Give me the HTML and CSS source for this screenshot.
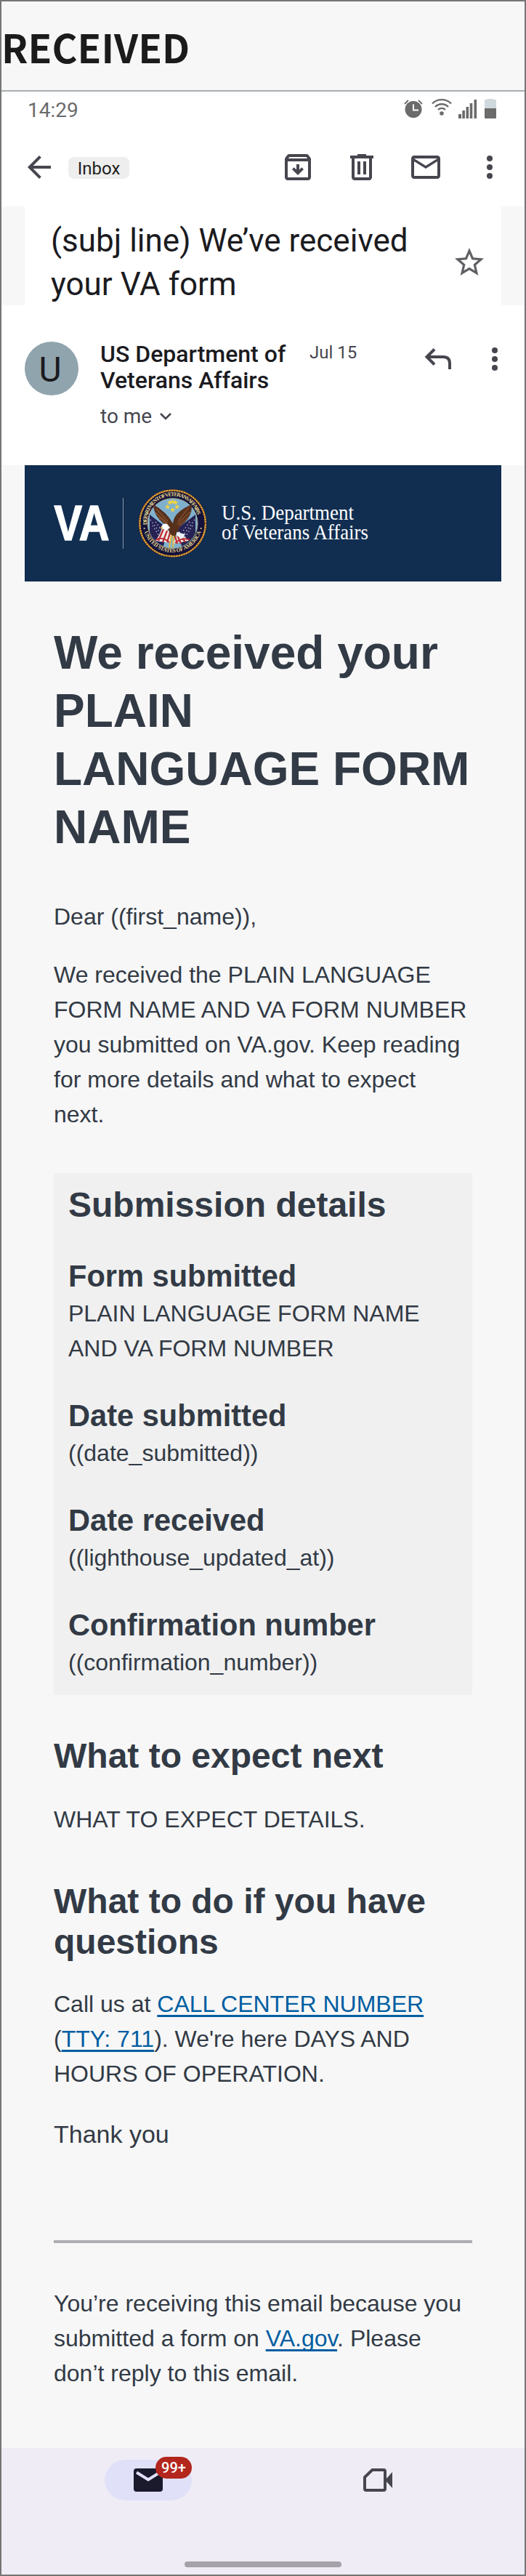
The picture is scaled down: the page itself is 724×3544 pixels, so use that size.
FILE: index.html
```html
<!DOCTYPE html>
<html lang="en">
<head>
<meta charset="utf-8">
<title>We received your form</title>
<link rel="stylesheet" href="styles.css">
</head>
<body>
<div class="frame">
  <header class="label"><span class="label-text">RECEIVED</span></header>

  <div class="status">
    <span class="clock">14:29</span>
    <svg class="status-icons" width="130" height="30" viewBox="0 0 130 30" fill="none">
      <circle cx="14" cy="16.500" r="11.500" fill="#6b6b6b"/>
      <path d="M14 9.500v8h7" stroke="#fff" stroke-width="2"/>
      <path d="M2 9l5-5M26 9l-5-5" stroke="#6b6b6b" stroke-width="1.800"/>
      <circle cx="53" cy="22" r="2.800" fill="#6b6b6b"/>
      <path d="M40 8.500a18.500 18.500 0 0 1 26 0M44 13a12.800 12.800 0 0 1 18 0M48 17a7 7 0 0 1 10 0" stroke="#6b6b6b" stroke-width="2.400"/>
      <path d="M76 23h4v6h-4zM81.300 18h3.600v11h-3.600zM86.500 13h3.600v16h-3.600zM91.700 8h3.600v21h-3.600zM97.500 3h3.600v26h-3.600z" fill="#6b6b6b"/>
      <path d="M112 4q0-1 1-1h3V2h8v1h3q1 0 1 1v12h-16z" fill="#cfd8dc"/>
      <path d="M112 15h16v13q0 1-1 1h-14q-1 0-1-1z" fill="#6b6b6b"/>
    </svg>
  </div>

  <nav class="toolbar">
    <svg width="48" height="48" viewBox="0 0 24 24" fill="#47464f"><path d="M20 11H7.830l5.590-5.590L12 4l-8 8 8 8 1.410-1.410L7.830 13H20z"/></svg>
    <span class="pill">Inbox</span>
    <div class="actions">
      <svg width="48" height="48" viewBox="0 0 24 24" fill="#47464f"><path d="M20.540 5.230l-1.390-1.680C18.880 3.210 18.470 3 18 3H6c-.47 0-.88.21-1.160.55L3.460 5.230C3.170 5.570 3 6.020 3 6.500V19c0 1.100.9 2 2 2h14c1.100 0 2-.9 2-2V6.500c0-.48-.17-.93-.46-1.270zM6.240 5h11.520l.83 1H5.420l.82-1zM5 19V8h14v11H5zM13 10h-2v3.700l-1.600-1.600L8 13.500l4 4 4-4-1.400-1.400-1.600 1.600z"/></svg>
      <svg width="48" height="48" viewBox="0 0 24 24" fill="#47464f"><path d="M15 4V3H9v1H4v2h1v13c0 1.100.9 2 2 2h10c1.100 0 2-.9 2-2V6h1V4h-5zm2 15H7V6h10v13zM9 8h2v9H9zM13 8h2v9h-2z"/></svg>
      <svg width="48" height="48" viewBox="0 0 24 24" fill="#47464f"><path d="M20 4H4c-1.100 0-2 .9-2 2v12c0 1.100.9 2 2 2h16c1.100 0 2-.9 2-2V6c0-1.100-.9-2-2-2zm0 14H4V8l8 5 8-5v10zm-8-7L4 6h16l-8 5z"/></svg>
      <svg width="48" height="48" viewBox="0 0 24 24" fill="#47464f"><circle cx="12" cy="6" r="2"/><circle cx="12" cy="12" r="2"/><circle cx="12" cy="18" r="2"/></svg>
    </div>
  </nav>

  <section class="subject-band">
    <div class="subject">
      <h1 class="subject-text">(subj line) We’ve received<br>your VA form</h1>
      <svg class="star" width="48" height="48" viewBox="0 0 24 24" fill="#5f6064"><path d="M22 9.240l-7.190-.62L12 2 9.190 8.630 2 9.240l5.460 4.730L5.820 21 12 17.270 18.180 21l-1.630-7.030L22 9.240zM12 15.400l-3.760 2.270 1-4.280-3.320-2.880 4.380-.38L12 6.100l1.710 4.040 4.380.38-3.320 2.880 1 4.280L12 15.400z"/></svg>
    </div>
  </section>

  <section class="sender">
    <div class="avatar">U</div>
    <div class="sender-info">
      <div class="name">US Department of<br>Veterans Affairs</div>
      <div class="to">to me
        <svg width="18" height="12" viewBox="0 0 18 12" fill="none" stroke="#47464f" stroke-width="2.600"><path d="M2 2l7 7 7-7"/></svg>
      </div>
    </div>
    <div class="date">Jul 15</div>
    <svg class="reply" width="38" height="30" viewBox="0 0 38 30" fill="none" stroke="#47464f" stroke-width="4"><path d="M14 1.500L3.500 12 14 22.500M4 12h22q9 0 9 9v8"/></svg>
    <svg class="more" width="8" height="32" viewBox="0 0 8 32" fill="#47464f"><circle cx="4" cy="4" r="4"/><circle cx="4" cy="16" r="4"/><circle cx="4" cy="28" r="4"/></svg>
  </section>

  <main class="mail">
    <svg class="banner" width="656" height="160" viewBox="34 640 656 160">
      <defs>
        <path id="arc-top" d="M202.600 723a35.400 35.400 0 1 1 70 0"/>
        <path id="arc-bottom" d="M197.400 727a41 41 0 0 0 80.400 0"/>
        <clipPath id="disc"><circle cx="237.600" cy="720" r="34"/></clipPath>
      </defs>
      <rect x="34" y="640" width="656" height="160" fill="#112e51"/>
      <text class="va" x="74.500" y="743" textLength="76" lengthAdjust="spacingAndGlyphs">VA</text>
      <path d="M169.500 685v70" stroke="#8797a8"/>
      <circle cx="237.600" cy="720" r="47.200" fill="#1d1838"/>
      <circle cx="237.600" cy="720" r="45.300" fill="none" stroke="#e3a735" stroke-width="2.200"/>
      <circle cx="237.600" cy="720" r="45.300" fill="none" stroke="#7a4a22" stroke-width="2.200" stroke-dasharray="1 2.500"/>
      <circle cx="237.600" cy="720" r="43.800" fill="#14123c"/>
      <circle cx="237.600" cy="720" r="34.500" fill="#7fb1cf" stroke="#c9b97a" stroke-width=".7"/>
      <g clip-path="url(#disc)">
        <path d="M206 708l26 20-8 26-18-8z" fill="#262254"/>
        <path d="M269 708l-26 20 8 26 18-8z" fill="#262254"/>
        <path d="M207 715l17 23M210 723l12 19M214 718l10 14M268 715l-17 23M265 723l-12 19M261 718l-10 14" stroke="#b9bdd6" stroke-width="1.300" stroke-dasharray="1.500 3"/>
        <path d="M223 726l12 5-1 16-20-3q6-8 9-18zM246 731l14 13-22 4z" fill="#f1eee9"/>
        <path d="M225 728l-7 16M230 730l-6 16M234 733l-4 13M247 734l8 12M244 736l5 12M241 738l3 10" stroke="#b92c35" stroke-width="2.300"/>
        <path d="M214 743q10-6 20 4M261 743q-9-5-20 4" stroke="#b92c35" stroke-width="2" fill="none"/>
      </g>
      <path d="M211 694q1 19 20 30l2 9 7 7 5-10 4-7q16-11 15-29-8 3-16 9-9 7-10 17-9-16-27-26z" fill="#57301c"/>
      <path d="M215 700l16 17M214 705l17 15M218 711l13 11M260 698l-15 19M262 704l-18 17M259 712l-13 11" stroke="#8a5431" stroke-width="1.200"/>
      <path d="M222 725q2-6 8-4l4 5-5 4q-5-2-7-5z" fill="#fff"/>
      <path d="M223 724l-3 3 4 0z" fill="#e8b93a"/>
      <path d="M243 732l12 3-4 6-8-4z" fill="#eaf1f6"/>
      <path d="M236 736l-3 17M239 737l-1 16" stroke="#e6b93b" stroke-width="2"/>
      <g fill="#f2d33f">
        <path id="s" d="M237.600 686.500l.9 2.600 2.800.1-2.200 1.700.8 2.700-2.300-1.600-2.300 1.600.8-2.700-2.200-1.700 2.800-.1z"/>
        <use href="#s" x="-4" y="1"/><use href="#s" x="4" y="1"/>
        <use href="#s" x="-7" y="7"/><use href="#s" x="6" y="7"/><use href="#s" x="0" y="11"/>
      </g>
      <text class="seal-text"><textPath href="#arc-top" startOffset="1" textLength="106">DEPARTMENT OF VETERANS AFFAIRS</textPath></text>
      <text class="seal-text"><textPath href="#arc-bottom" startOffset="5" textLength="103">UNITED STATES OF AMERICA</textPath></text>
      <circle cx="198.600" cy="727" r="1" fill="#e9dc8e"/><circle cx="276.600" cy="727" r="1" fill="#e9dc8e"/>
      <text class="dept" x="305" y="715" textLength="182" lengthAdjust="spacingAndGlyphs">U.S. Department</text>
      <text class="dept" x="305" y="742" textLength="202" lengthAdjust="spacingAndGlyphs">of Veterans Affairs</text>
    </svg>

    <article class="body">
      <h1 class="title">We received your<br>PLAIN<br>LANGUAGE FORM<br>NAME</h1>
      <p class="dear">Dear ((first_name)),</p>
      <p class="intro">We received the PLAIN LANGUAGE<br>FORM NAME AND VA FORM NUMBER<br>you submitted on VA.gov. Keep reading<br>for more details and what to expect<br>next.</p>

      <section class="details">
        <h2>Submission details</h2>
        <h3>Form submitted</h3>
        <p>PLAIN LANGUAGE FORM NAME<br>AND VA FORM NUMBER</p>
        <h3>Date submitted</h3>
        <p>((date_submitted))</p>
        <h3>Date received</h3>
        <p>((lighthouse_updated_at))</p>
        <h3>Confirmation number</h3>
        <p>((confirmation_number))</p>
      </section>

      <h2 class="next">What to expect next</h2>
      <p class="next-text">WHAT TO EXPECT DETAILS.</p>
      <h2 class="questions">What to do if you have<br>questions</h2>
      <p class="call">Call us at <a>CALL CENTER NUMBER</a><br>(<a>TTY: 711</a>). We're here DAYS AND<br>HOURS OF OPERATION.</p>
      <p class="thanks">Thank you</p>
      <div class="rule"></div>
      <p class="foot">You’re receiving this email because you<br>submitted a form on <a>VA.gov</a>. Please<br>don’t reply to this email.</p>
    </article>
  </main>

  <footer class="tabs">
    <div class="tab-row">
      <div class="tab-active">
        <svg width="40" height="32" viewBox="0 0 40 32"><rect width="40" height="32" rx="4" fill="#1a1a2c"/><path d="M4 5.500l16 10 16-10" fill="none" stroke="#e1e0f9" stroke-width="4"/></svg>
        <span class="badge">99+</span>
      </div>
      <svg class="meet" width="40" height="32" viewBox="0 0 40 32"><path d="M12.500 2H28q2 0 2 2v24q0 2-2 2H4q-2 0-2-2V12z" fill="none" stroke="#47464f" stroke-width="4"/><path d="M30 16l10-11v22z" fill="#47464f"/></svg>
    </div>
    <div class="home-bar"></div>
  </footer>
</div>
</body>
</html>
```
FILE: styles.css
```css
* { box-sizing: border-box; margin: 0; padding: 0; }
body { width: 724px; background: #f7f7f7; font-family: "Liberation Sans", Arial, sans-serif; color: #323a45; }
svg { display: block; flex: none; }
.frame { width: 724px; height: 3544px; border: 2px solid #757575; background: #f7f7f7; }

.label { height: 124px; border-bottom: 2px solid #a9aeb1; padding-top: 22px; }
.label-text { display: block; font: 700 53.500px/80px "Noto Sans CJK SC", sans-serif; color: #1b1b1b; }

.status { height: 54px; background: #fff; display: flex; justify-content: space-between; padding: 8px 37px 0 36px; font-family: Roboto, sans-serif; }
.clock { font-size: 28px; line-height: 36px; color: #6b6b6b; }

.toolbar { height: 104px; background: #fff; display: flex; align-items: center; padding: 0 24px 4px 28px; font-family: Roboto, sans-serif; }
.pill { margin: 2px 0 0 16px; width: 84px; height: 30px; border-radius: 8px; background: #eee; color: #1f1f1f; font-size: 24px; line-height: 32px; text-align: center; }
.actions { flex: 1; display: flex; justify-content: flex-end; gap: 40px; }

.subject-band { height: 136px; padding: 0 32px; }
.subject { height: 136px; background: #fff; display: flex; justify-content: space-between; padding: 17px 20px 0 36px; font-family: Roboto, sans-serif; }
.subject-text { font-size: 44px; line-height: 60px; font-weight: 400; color: #1b1b1f; white-space: nowrap; }
.star { margin-top: 36px; }

.sender { height: 220px; background: #fff; display: flex; align-items: flex-start; padding: 49px 36px 0 32px; font-family: Roboto, sans-serif; color: #1b1b1f; }
.avatar { margin-top: 1px; width: 74px; height: 74px; border-radius: 50%; background: #90a4ae; font-size: 48px; line-height: 77px; text-align: center; padding-right: 4px; }
.sender-info { width: 318px; padding-left: 30px; white-space: nowrap; }
.name { font-size: 32px; line-height: 36px; font-weight: 500; }
.to { display: flex; align-items: center; gap: 10px; margin-top: 14px; font-size: 28px; line-height: 36px; color: #47464f; }
.date { width: 158px; padding-top: 2px; font-size: 24px; line-height: 28px; color: #47464f; }
.reply { margin-top: 10px; }
.more { margin: 9px 0 0 55px; }

.mail { padding: 0 32px; }
.va { font: 700 69px "Liberation Sans", Arial, sans-serif; fill: #fff; stroke: #fff; stroke-width: 1.500px; }
.dept { font: 29px "Liberation Serif", serif; fill: #fff; }
.seal-text { font: 700 7.500px "Liberation Serif", serif; fill: #e9dc8e; }

.body { padding: 58px 40px 79px; font-size: 32px; line-height: 48px; white-space: nowrap; }
.title { font-size: 64px; line-height: 80px; }
.dear { margin-top: 59px; }
.intro { margin-top: 32px; }
.body h2 { font-size: 48px; line-height: 56px; }
.body h3 { font-size: 41.600px; line-height: 48px; margin: 45px 0 3px; }
.details { margin-top: 57px; height: 718px; background: #f0f0f0; padding: 16px 20px 0; }
.details h2 + h3 { margin-top: 46px; }
.next { margin-top: 56px; }
.next-text { margin-top: 35px; }
.questions { margin-top: 61px; }
.call { margin-top: 33px; }
.thanks { margin-top: 35px; font-size: 34px; }
.rule { margin-top: 122px; height: 4px; background: #adaeb5; }
.foot { margin-top: 59px; }
a { color: #005ea2; text-decoration: underline; text-decoration-thickness: 3px; text-underline-offset: 4px; text-decoration-skip-ink: none; }

.tabs { height: 174px; background: #efecf6; padding-top: 16px; display: flex; flex-direction: column; align-items: center; }
.tab-row { width: 100%; display: flex; align-items: center; padding-left: 142px; }
.tab-active { position: relative; width: 120px; height: 56px; border-radius: 28px; background: #e1e0f9; padding: 12px 40px; }
.badge { position: absolute; top: -4px; right: 0; width: 50px; height: 30px; border-radius: 15px; background: #b3261e; color: #fff; font: 500 20px/31px Roboto, sans-serif; text-align: center; }
.meet { margin-left: 236px; }
.home-bar { margin-top: 84px; width: 216px; height: 8px; border-radius: 4px; background: #a5a2aa; }
```
